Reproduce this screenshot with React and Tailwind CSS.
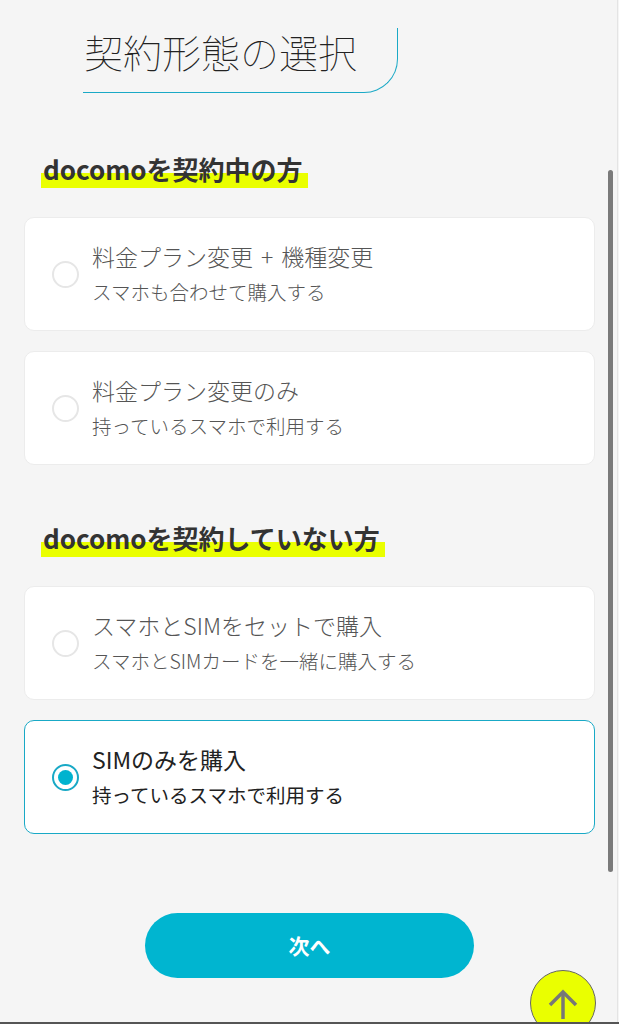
import React from "react";

const font = { fontFamily: '"Noto Sans CJK JP", "Noto Sans", sans-serif' };

function Radio({ checked }) {
  if (checked) {
    return (
      <div className="w-[27px] h-[27px] rounded-full border-2 border-[#19a9c6] flex items-center justify-center shrink-0 bg-white">
        <div className="w-[15px] h-[15px] rounded-full bg-[#00b3cf]" />
      </div>
    );
  }
  return <div className="w-[27px] h-[27px] rounded-full border-2 border-[#e6e6e6] bg-white shrink-0" />;
}

function Card({ title, sub, checked }) {
  return (
    <div
      className={
        "h-[114px] rounded-[10px] bg-white flex items-center pl-[27px] gap-[13px] " +
        (checked ? "border border-[#19a9c6]" : "border border-[#ececec]")
      }
    >
      <Radio checked={checked} />
      <div className={"pb-[2px] " + (checked ? "text-[#222] font-normal" : "text-[#555] font-light")}>
        <div className="text-[23px] leading-[34px]">{title}</div>
        <div className="text-[19.5px] leading-[30px] mt-[4px]">{sub}</div>
      </div>
    </div>
  );
}

function Heading({ children }) {
  return (
    <div className="pl-[41px]">
      <h2 className="inline-block pl-[2px] pr-[5px] h-[36px] text-[26px] leading-[34px] font-bold text-[#333] bg-[linear-gradient(transparent_58%,#eaff00_58%)]">
        {children}
      </h2>
    </div>
  );
}

export default function App() {
  return (
    <div style={font} className="relative w-[619px] h-[1024px] overflow-hidden bg-[#f5f5f5]">
      <div className="pt-[28px] pl-[83px]">
        <div className="inline-block h-[65px] pr-[40px] border-b-[1.5px] border-r-[1.5px] border-[#1aa9c6] rounded-br-[34px]">
          <h1 className="text-[39px] leading-[46px] font-thin text-[#222] pl-[1px]">契約形態の選択</h1>
        </div>
      </div>

      <div className="mt-[59px]">
        <Heading>docomoを契約中の方</Heading>
      </div>
      <div className="px-[24px] mt-[29px] flex flex-col gap-[20px]">
        <Card
          title={
            <>
              料金プラン変更<span className="inline-block px-[8px]">+</span>機種変更
            </>
          }
          sub="スマホも合わせて購入する"
        />
        <Card title="料金プラン変更のみ" sub="持っているスマホで利用する" />
      </div>

      <div className="mt-[56px]">
        <Heading>docomoを契約していない方</Heading>
      </div>
      <div className="px-[24px] mt-[29px] flex flex-col gap-[20px]">
        <Card title="スマホとSIMをセットで購入" sub="スマホとSIMカードを一緒に購入する" />
        <Card title="SIMのみを購入" sub="持っているスマホで利用する" checked />
      </div>

      <div className="flex justify-center mt-[79px]">
        <button className="w-[329px] h-[65px] rounded-full bg-[#00b5d0] text-white text-[21px] font-bold">
          次へ
        </button>
      </div>

      {/* scrollbar */}
      <div className="absolute left-[608px] top-[170px] w-[5px] h-[702px] rounded-full bg-[#7a7a7a]" />
      <div className="absolute right-[1px] top-0 w-[1px] h-full bg-[#e4e4e4]" />

      {/* back to top */}
      <div className="absolute left-[530px] top-[970px] w-[66px] h-[66px] rounded-full bg-[#eaff00] border border-[#666] flex justify-center pt-[18px]">
        <svg width="30" height="30" viewBox="0 0 30 30" fill="none" stroke="#777" strokeWidth="3.5" strokeLinecap="butt">
          <path d="M15 3 V30" />
          <path d="M2 16 L15 3 L28 16" />
        </svg>
      </div>

      <div className="absolute left-0 bottom-0 w-full h-[2px] bg-[#555]" />
    </div>
  );
}
